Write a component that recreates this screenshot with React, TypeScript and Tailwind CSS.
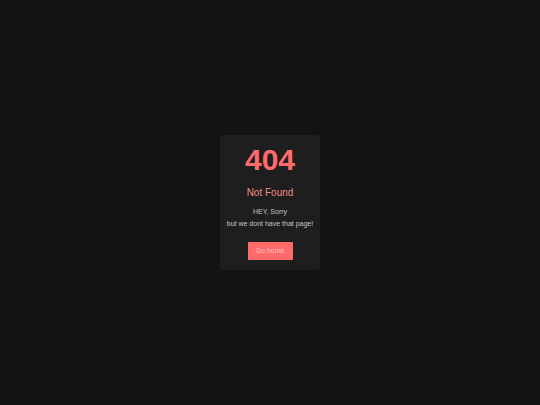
export default function App() {
  return (
    <div
      className="min-h-screen w-full bg-[#131313] flex items-center justify-center"
      style={{ fontFamily: '"Liberation Sans", Arial, sans-serif' }}
    >
      <div className="w-[100px] rounded-[3px] bg-[#1e1e1e] px-1 pt-[10px] pb-[10px] flex flex-col items-center text-center">
        <h1 className="text-[30px] leading-[30px] font-bold text-[#ff6b6b]">404</h1>
        <h2 className="mt-[11px] text-[10px] leading-[14px] text-[#f28b8b]">Not Found</h2>
        <p className="mt-[6px] whitespace-nowrap text-[7px] leading-[12px] text-[#c4c4c4]">
          HEY, Sorry
          <br />
          but we dont have that page!
        </p>
        <button className="mt-[12px] h-[18px] w-[45px] rounded-[1px] bg-[#ff6b6b] text-[7px] text-[#ffc2c2]">
          Go home
        </button>
      </div>
    </div>
  );
}
